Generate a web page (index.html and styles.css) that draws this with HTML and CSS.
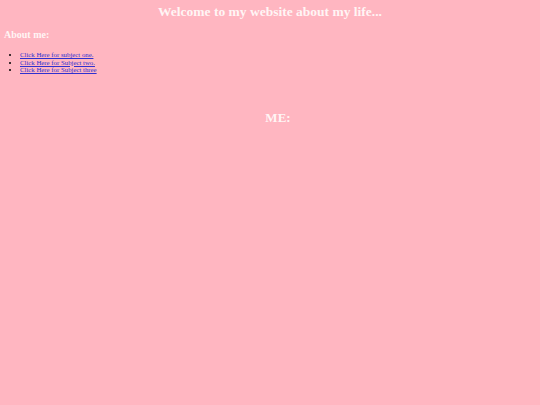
FILE: index.html
```html
<!DOCTYPE html>
<html>
<head>
<meta charset="utf-8">
<link rel="stylesheet" href="styles.css">
</head>
<body>
<h1 class="title">Welcome to my website about my life...</h1>
<h2 class="about">About me:</h2>
<ul class="links">
<li><a href="#">Click Here for subject one.</a></li>
<li><a href="#">Click Here for Subject two.</a></li>
<li><a href="#">Click Here for Subject three</a></li>
</ul>
<h2 class="me">ME:</h2>
</body>
</html>
```
FILE: styles.css
```css
html, body {
  margin: 0;
  background: #ffb6c1;
}
body {
  padding: 0 4px;
  font-family: "Liberation Serif", serif;
}
.title {
  margin: 0;
  padding-top: 3px;
  text-align: center;
  font-size: 13.5px;
  line-height: 17px;
  color: #fff5f5;
  font-weight: bold;
}
.about {
  margin: 9px 0 0;
  font-size: 10px;
  line-height: 12px;
  color: #fff5f5;
}
.links {
  margin: 10px 0 0;
  padding-left: 16px;
  font-size: 6.8px;
  line-height: 7.5px;
}
.links a {
  color: #3030d0;
}
.me {
  margin: 36px 0 0;
  padding-left: 16px;
  text-align: center;
  font-size: 13px;
  line-height: 15px;
  color: #fff5f5;
}
```
